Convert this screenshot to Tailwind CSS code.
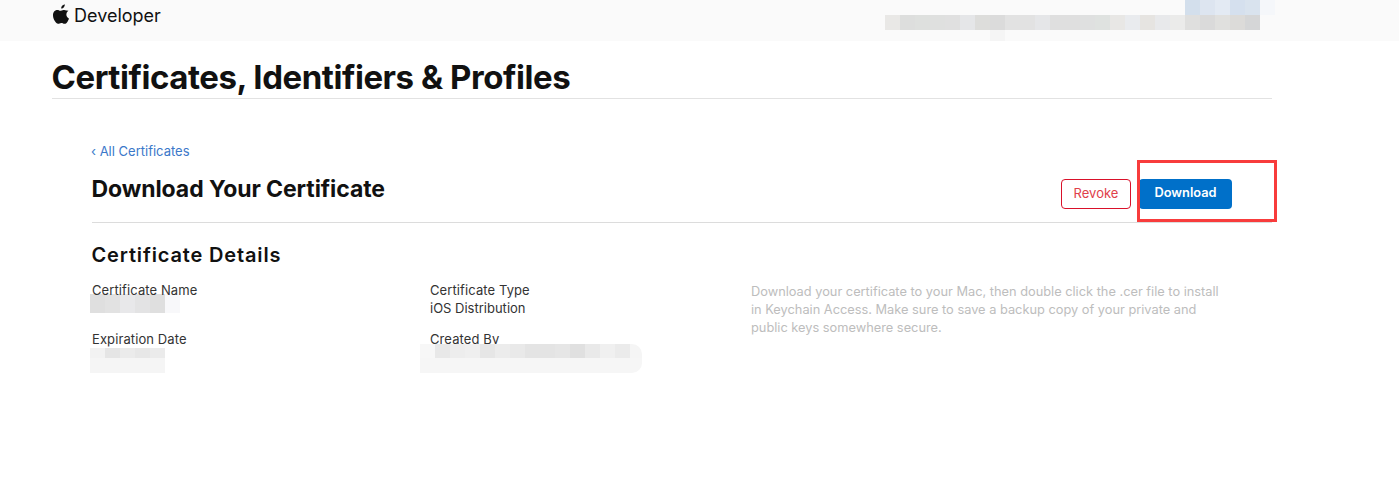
<!DOCTYPE html>
<html lang="en">
<head>
    <meta charset="UTF-8">
    <title>Download Your Certificate</title>
    <script src="https://cdn.jsdelivr.net/npm/@tailwindcss/browser@4"></script>
</head>
<body class="bg-white font-['Inter',sans-serif] text-[#111] overflow-hidden">
<div class="relative h-[491px] w-[1399px]">

    <!-- top bar -->
    <div class="relative h-[41px] bg-[#fafafa] pl-[53px] pt-[3px] flex items-start">
        <svg class="w-[16px] h-[20px] mr-[5px] mt-[1px]" viewBox="0 0 814 1000" fill="#111"><path d="M788 341c-6 4-108 62-108 190 0 149 130 201 134 203-1 3-21 72-69 143-43 62-88 124-156 124s-86-40-165-40c-77 0-104 41-167 41s-106-57-156-127C42 793 0 678 0 568c0-176 114-269 227-269 60 0 110 39 148 39 36 0 92-42 160-42 26 0 119 2 253 45zM554 159c28-33 48-80 48-126 0-6-1-13-2-18-46 2-100 31-133 69-26 29-50 76-50 123 0 7 1 14 2 16 3 1 8 1 12 1 41 0 93-27 123-65z"/></svg>
        <span class="text-[18px] leading-[26px] text-[#111] tracking-[0px]">Developer</span>

        <!-- blurred account name -->
        <div class="absolute left-[885px] top-[15px] flex h-[15px]">
            <i class="w-[15px] bg-[#e9e8e6]"></i><i class="w-[15px] bg-[#dddedd]"></i><i class="w-[15px] bg-[#dee0de]"></i><i class="w-[15px] bg-[#dfe0df]"></i><i class="w-[15px] bg-[#e0e0e0]"></i><i class="w-[15px] bg-[#e5e6e8]"></i><i class="w-[15px] bg-[#dddddb]"></i><i class="w-[15px] bg-[#dbdbdb]"></i><i class="w-[15px] bg-[#e2e2e2]"></i><i class="w-[15px] bg-[#e2e2e2]"></i><i class="w-[15px] bg-[#e5e6e8]"></i><i class="w-[15px] bg-[#dfdfdf]"></i><i class="w-[15px] bg-[#dfdfdf]"></i><i class="w-[15px] bg-[#dfe0e0]"></i><i class="w-[15px] bg-[#dfe2e0]"></i><i class="w-[15px] bg-[#e8e7e5]"></i><i class="w-[15px] bg-[#e9ebee]"></i><i class="w-[15px] bg-[#e6e4e1]"></i><i class="w-[15px] bg-[#e8e9eb]"></i><i class="w-[15px] bg-[#ebebea]"></i><i class="w-[15px] bg-[#dfdfde]"></i><i class="w-[15px] bg-[#dadada]"></i><i class="w-[15px] bg-[#e0e0de]"></i><i class="w-[15px] bg-[#dcdbd9]"></i><i class="w-[15px] bg-[#d5d6d7]"></i>
        </div>
        <div class="absolute left-[1185px] top-0 flex h-[15px]">
            <i class="w-[15px] bg-[#d3dfec]"></i><i class="w-[15px] bg-[#dde5f0]"></i><i class="w-[15px] bg-[#e3eaf3]"></i><i class="w-[15px] bg-[#d5e0ee]"></i><i class="w-[15px] bg-[#d9e3ee]"></i><i class="w-[15px] bg-[#f5f7fa]"></i>
        </div>
        <i class="absolute left-[990px] top-[30px] w-[15px] h-[11px] bg-[#f5f5f5]"></i>
    </div>

    <!-- page title -->
    <div class="mx-[52px] w-[1220px] h-[58px] border-b border-[#e2e2e2]">
        <h1 class="text-[33px] leading-[73px] font-bold -ml-[0.5px] tracking-[-0.45px] text-[#111]">Certificates, Identifiers &amp; Profiles</h1>
    </div>

    <!-- content -->
    <div class="ml-[92px] w-[1180px]">
        <div class="h-[124px] border-b border-[#dcdcdc] pt-[44px] flex justify-between">
            <div>
                <a class="block -ml-[1px] text-[13px] leading-[16px] text-[#3b78c9]">‹ All Certificates</a>
                <h2 class="mt-[15px] text-[23px] leading-[30px] font-bold -ml-[0.5px] tracking-[-0.08px]">Download Your Certificate</h2>
            </div>
            <div class="flex gap-[8px] mt-[36px] mr-[40px]">
                <button class="w-[70px] h-[30px] pb-[1px] rounded-[4px] border border-[#d9112a] bg-white text-[13px] text-[#e0404a]">Revoke</button>
                <button class="w-[93px] h-[30px] pb-[2px] rounded-[4px] bg-[#0070c9] text-[12.8px] font-semibold text-white">Download</button>
            </div>
        </div>

        <h3 class="mt-[19px] -ml-[0.5px] text-[20px] leading-[26px] font-semibold tracking-[0.85px]">Certificate Details</h3>

        <div class="mt-[13px] flex text-[13px] leading-[18px] text-[#333] tracking-[0.1px]">
            <div class="w-[338px]">
                <p class="relative">Certificate Name</p>
                <div class="flex h-[19px] -ml-[2px] -mt-[5px]">
                    <i class="w-[15px] bg-[#dfdfdf]"></i><i class="w-[15px] bg-[#e2e2e2]"></i><i class="w-[15px] bg-[#e8e8ea]"></i><i class="w-[15px] bg-[#e3e3e4]"></i><i class="w-[15px] bg-[#dfdfdf]"></i><i class="w-[15px] bg-[#f8f8fa]"></i>
                </div>
                <p class="mt-[17px]">Expiration Date</p>
                <div class="flex h-[10px] -ml-[2px]">
                    <i class="w-[15px] bg-[#f2f2f2]"></i><i class="w-[15px] bg-[#e5e5e5]"></i><i class="w-[15px] bg-[#ebebeb]"></i><i class="w-[15px] bg-[#e7e7e7]"></i><i class="w-[15px] bg-[#ebebeb]"></i>
                </div>
                <div class="h-[15px] -ml-[2px] w-[75px] bg-[#f5f5f5]"></div>
            </div>
            <div class="w-[321px]">
                <p>Certificate Type</p>
                <p class="tracking-normal">iOS Distribution</p>
                <p class="mt-[13px]">Created By</p>
                <div class="relative flex h-[14px] -ml-[10px] -mt-[4px]">
                    <i class="w-[15px] bg-[#f7f7f7]"></i><i class="w-[15px] bg-[#e8e8e8]"></i><i class="w-[15px] bg-[#ededed]"></i><i class="w-[15px] bg-[#efefef]"></i><i class="w-[15px] bg-[#e6e6e6]"></i><i class="w-[15px] bg-[#ececec]"></i><i class="w-[15px] bg-[#e9e9e9]"></i><i class="w-[15px] bg-[#e4e4e4]"></i><i class="w-[15px] bg-[#e4e4e4]"></i><i class="w-[15px] bg-[#e6e6e6]"></i><i class="w-[15px] bg-[#e0e0e0]"></i><i class="w-[15px] bg-[#e9e9e9]"></i><i class="w-[15px] bg-[#f0f0f0]"></i><i class="w-[15px] bg-[#ebebeb]"></i><i class="w-[12px] rounded-tr-[10px] bg-[#f5f5f5]"></i>
                </div>
                <div class="h-[15px] -ml-[10px] w-[222px] rounded-br-[10px] bg-[#f6f6f6]"></div>
            </div>
            <p class="w-[480px] pt-[2px] text-[12.8px] text-[#bdbdbd] tracking-normal">Download your certificate to your Mac, then double click the .cer file to install in Keychain Access. Make sure to save a backup copy of your private and public keys somewhere secure.</p>
        </div>
    </div>

    <!-- red annotation box -->
    <div class="absolute left-[1137px] top-[160px] w-[140px] h-[62px] border-[3px] border-[#f83c3c]"></div>
</div>
</body>
</html>
